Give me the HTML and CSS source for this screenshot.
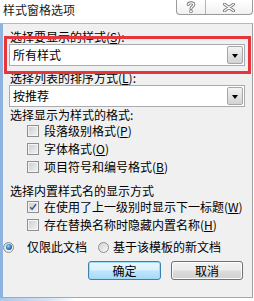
FILE: index.html
```html
<!DOCTYPE html>
<html lang="zh-CN">
<head>
<meta charset="utf-8">
<title>样式窗格选项</title>
<link rel="stylesheet" href="styles.css">
</head>
<body>
<div class="window">
  <div class="titlebar">
    <span class="title">样式窗格选项</span>
    <div class="caption">
      <div class="cbtn help">
        <svg width="10" height="12" viewBox="0 0 10 12">
          <path d="M2.2 3.6 C2.2 1.2 7.8 1.2 7.8 3.6 C7.8 5.6 5 5.4 5 7.6" fill="none" stroke="#7a7a7a" stroke-width="3" stroke-linecap="round"/>
          <path d="M2.2 3.6 C2.2 1.2 7.8 1.2 7.8 3.6 C7.8 5.6 5 5.4 5 7.6" fill="none" stroke="#ffffff" stroke-width="1.2" stroke-linecap="round"/>
          <circle cx="5" cy="10.3" r="1.5" fill="#fff" stroke="#7a7a7a" stroke-width="0.9"/>
        </svg>
      </div>
      <div class="cbtn close">
        <svg width="12" height="9" viewBox="0 0 12 9">
          <path d="M1.5 1.2 L10.5 7.8 M10.5 1.2 L1.5 7.8" fill="none" stroke="#7a7a7a" stroke-width="3" stroke-linecap="round"/>
          <path d="M1.5 1.2 L10.5 7.8 M10.5 1.2 L1.5 7.8" fill="none" stroke="#ffffff" stroke-width="1.2" stroke-linecap="round"/>
        </svg>
      </div>
    </div>
  </div>
  <div class="client">
    <div class="label first">选择要显示的样式(<u>S</u>):</div>
    <div class="combo"><span class="ctext">所有样式</span><span class="arrow"><i></i></span></div>
    <div class="label second">选择列表的排序方式(<u>L</u>):</div>
    <div class="combo"><span class="ctext">按推荐</span><span class="arrow"><i></i></span></div>
    <div class="label third">选择显示为样式的格式:</div>
    <div class="check"><span class="box"></span><span>段落级别格式(<u>P</u>)</span></div>
    <div class="check"><span class="box"></span><span>字体格式(<u>O</u>)</span></div>
    <div class="check"><span class="box"></span><span>项目符号和编号格式(<u>B</u>)</span></div>
    <div class="label fourth">选择内置样式名的显示方式</div>
    <div class="check"><span class="box checked"><svg width="12" height="12" viewBox="0 0 12 12"><path d="M2.6 6.2 L5 8.6 L9.6 2.8" fill="none" stroke="#3a5795" stroke-width="1.8"/></svg></span><span>在使用了上一级别时显示下一标题(<u>W</u>)</span></div>
    <div class="check"><span class="box"></span><span>存在替换名称时隐藏内置名称(<u>H</u>)</span></div>
    <div class="radios">
      <span class="radio on"><i></i></span><span class="rtext first-r">仅限此文档</span>
      <span class="radio"></span><span class="rtext">基于该模板的新文档</span>
    </div>
    <div class="buttons">
      <div class="btn default">确定</div>
      <div class="btn">取消</div>
    </div>
  </div>
  <div class="bottomframe"></div>
  <div class="highlight"></div>
</div>
</body>
</html>
```
FILE: styles.css
```css
html, body {
  margin: 0;
  padding: 0;
  background: #ffffff;
}
body {
  width: 254px;
  height: 301px;
  overflow: hidden;
  font-family: "Noto Sans CJK SC", "Noto Sans", sans-serif;
  font-size: 12px;
  color: #000;
}
.window {
  position: relative;
  width: 254px;
  height: 301px;
  background: #ffffff;
}
.titlebar {
  height: 23px;
  display: flex;
  align-items: flex-start;
}
.title {
  padding: 3px 0 0 3px;
  line-height: 14px;
  font-size: 12px;
  color: #1a1a1a;
}
.caption {
  margin-left: auto;
  margin-right: 1px;
  display: flex;
  height: 14px;
  border: 1px solid #9a9a9a;
  border-top: none;
  border-radius: 0 0 4px 4px;
  background: linear-gradient(#ffffff, #f1f1f1);
}
.cbtn {
  height: 14px;
  display: flex;
  align-items: center;
  justify-content: center;
}
.help {
  width: 28px;
  border-right: 1px solid #b4b4b4;
}
.close {
  width: 46px;
}
.client {
  height: 273px;
  border-top: 1px solid #b9b9b9;
  border-bottom: 1px solid #a8a8a8;
  border-left: 3px solid #8fb3e0;
  border-right: 1px solid #a0a0a0;
  margin-right: 1px;
  background: #f0f0f0;
  display: flex;
  flex-direction: column;
}
.label {
  height: 13px;
  line-height: 13px;
  padding-left: 7px;
  white-space: nowrap;
}
.label u, .check u {
  text-decoration: underline;
}
.label.first { margin-top: 6px; }
.label.second { margin-top: 5px; }
.label.third { margin-top: 1px; margin-bottom: 1px; }
.label.fourth { margin-top: 8px; margin-bottom: 1px; }
.combo {
  margin: 1px 0 0 6px;
  width: 236px;
  height: 22px;
  box-sizing: border-box;
  border: 1px solid #a9abb0;
  background: #ffffff;
  display: flex;
  align-items: center;
  padding: 0 1px 0 3px;
}
.ctext {
  flex: 1;
  font-size: 12px;
  line-height: 14px;
}
.arrow {
  width: 16px;
  height: 18px;
  box-sizing: border-box;
  border: 1px solid #a7a7a7;
  border-radius: 2px;
  background: linear-gradient(#f4f4f4, #e2e2e2 50%, #d3d3d3);
  display: flex;
  align-items: center;
  justify-content: center;
}
.arrow i {
  width: 0;
  height: 0;
  border-left: 3.5px solid transparent;
  border-right: 3.5px solid transparent;
  border-top: 4px solid #000;
  margin-top: 1px;
}
.check {
  height: 18px;
  display: flex;
  align-items: center;
  padding-left: 24px;
  white-space: nowrap;
  line-height: 14px;
}
.box {
  width: 12px;
  height: 12px;
  box-sizing: border-box;
  border: 1px solid #8e8f8f;
  background: linear-gradient(135deg, #c8ccd2, #f4f4f4);
  box-shadow: inset 0 0 0 1px #f4f4f4;
  margin-right: 5px;
  display: flex;
  align-items: center;
  justify-content: center;
  flex-shrink: 0;
}
.box svg {
  display: block;
}
.radios {
  margin-top: 4px;
  height: 18px;
  display: flex;
  align-items: center;
  white-space: nowrap;
  line-height: 14px;
}
.radio {
  width: 11px;
  height: 11px;
  box-sizing: border-box;
  border-radius: 50%;
  border: 1px solid #8e8f8f;
  background: linear-gradient(135deg, #cfd3d8, #f8f8f8);
  display: flex;
  align-items: center;
  justify-content: center;
  margin-right: 4px;
  flex-shrink: 0;
}
.radio.on i {
  width: 6px;
  height: 6px;
  border-radius: 50%;
  background: radial-gradient(circle at 40% 35%, #9ad6f8, #2a74bb 55%, #0d3c74);
}
.rtext.first-r {
  margin-left: 9px;
  margin-right: 11px;
}
.buttons {
  margin-top: 5px;
  display: flex;
  justify-content: flex-end;
  gap: 10px;
  padding-right: 9px;
}
.btn {
  width: 72px;
  height: 19px;
  box-sizing: border-box;
  border: 1px solid #707070;
  border-radius: 3px;
  background: linear-gradient(#f2f2f2, #ebebeb 48%, #dddddd 52%, #cfcfcf);
  box-shadow: inset 0 0 0 1px #fcfcfc;
  text-align: center;
  line-height: 17px;
  font-size: 12px;
}
.btn.default {
  width: 73px;
  border-color: #3c7fb1;
  box-shadow: inset 0 0 0 1px #9edcf8;
  background: linear-gradient(#eaf6fd, #d9f0fc 48%, #bee6fd 52%, #a7d9f5);
}
.bottomframe {
  height: 3px;
  background: linear-gradient(to right, #a9c8ee, #d7e5f6 20%, #ffffff 30%);
}
.highlight {
  position: absolute;
  left: 4px;
  top: 36px;
  width: 247px;
  height: 38px;
  box-sizing: border-box;
  border: 3px solid #e5363c;
}
```
